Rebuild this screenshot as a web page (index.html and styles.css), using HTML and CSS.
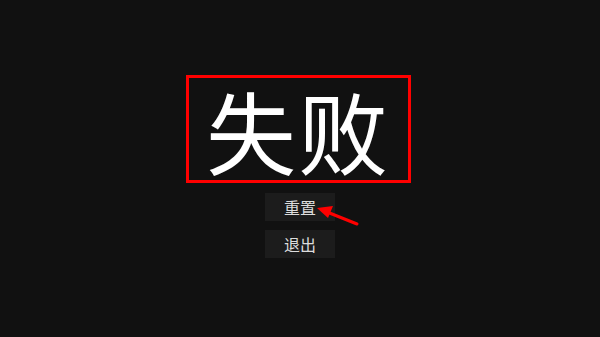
FILE: index.html
```html
<!DOCTYPE html>
<html>
<head>
  <meta charset="utf-8">
  <title>失败</title>
  <link rel="stylesheet" href="styles.css">
</head>
<body>
  <div class="screen">
    <div class="title-box">
      <h1 class="title">失败</h1>
    </div>
    <div class="menu">
      <button class="menu-button">重置</button>
      <button class="menu-button">退出</button>
    </div>
    <svg class="pointer" width="600" height="337" viewBox="0 0 600 337">
      <line x1="357" y1="224" x2="327" y2="212" stroke="#ff0000" stroke-width="3" stroke-linecap="round"/>
      <polygon points="317,208 333,206 328,218" fill="#ff0000"/>
    </svg>
  </div>
</body>
</html>
```

FILE: styles.css
```css
body {
  margin: 0;
  background-color: #111111;
  font-family: "Noto Sans CJK SC", "Noto Sans", sans-serif;
}

.screen {
  position: relative;
  width: 600px;
  height: 337px;
  display: flex;
  flex-direction: column;
  align-items: center;
  padding-top: 75px;
  box-sizing: border-box;
}

.title-box {
  width: 219px;
  height: 102px;
  border: 3px solid #ff0000;
  margin-left: -4px;
  display: flex;
  align-items: center;
  justify-content: center;
}

.title {
  margin: 0;
  font-size: 90px;
  font-weight: normal;
  line-height: 102px;
  color: #ffffff;
  letter-spacing: 2px;
}

.menu {
  display: flex;
  flex-direction: column;
  gap: 9px;
  margin-top: 10px;
}

.menu-button {
  width: 70px;
  height: 28px;
  padding: 0;
  border: none;
  background-color: #1c1c1c;
  color: #dddddd;
  font-family: "Noto Sans CJK SC", sans-serif;
  font-size: 16px;
  cursor: pointer;
}

.pointer {
  position: absolute;
  left: 0;
  top: 0;
  pointer-events: none;
}
```
